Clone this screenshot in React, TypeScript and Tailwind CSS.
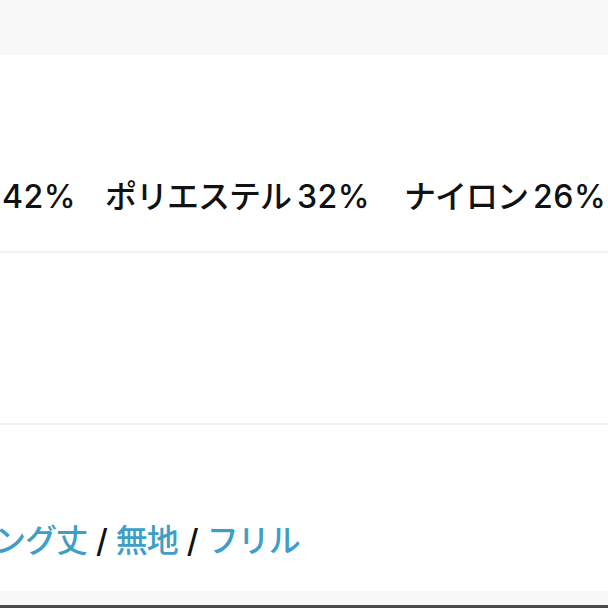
const jp = { fontFamily: '"Noto Sans CJK JP", "Noto Sans", sans-serif' }
const num = { fontFamily: 'Inter, "Noto Sans CJK JP", sans-serif' }

export default function App() {
  return (
    <div className="w-[608px] h-[608px] overflow-hidden bg-white flex flex-col" style={jp}>
      <div className="h-[55px] bg-[#f8f8f8] shrink-0" />

      {/* 素材 */}
      <div className="h-[198px] shrink-0 flex items-end pb-[38px] border-b-2 border-[#f1f1f1]">
        <p className="flex items-baseline text-[32px] leading-none font-medium text-[#111] whitespace-nowrap pl-[2px]">
          <span className="tracking-[0.5px]" style={num}>42%</span>
          <span className="ml-[29px] tracking-[-1px]">ポリエステル</span>
          <span className="ml-[6px] tracking-[0.5px]" style={num}>32%</span>
          <span className="ml-[34px] tracking-[-1px]">ナイロン</span>
          <span className="ml-[5px] tracking-[0.5px]" style={num}>26%</span>
        </p>
      </div>

      <div className="h-[172px] shrink-0 border-b-2 border-[#f1f1f1]" />

      {/* タグ */}
      <div className="h-[166px] shrink-0 flex items-end pb-[34px]">
        <p className="flex items-baseline text-[32px] leading-none font-medium whitespace-nowrap -ml-[6px] tracking-[-1px]">
          <span className="text-[#3d9fc6]">ング丈</span>
          <span className="text-[#111] mx-[9px]" style={num}>/</span>
          <span className="text-[#3d9fc6]">無地</span>
          <span className="text-[#111] mx-[9px]" style={num}>/</span>
          <span className="text-[#3d9fc6]">フリル</span>
        </p>
      </div>

      <div className="h-[14px] shrink-0 bg-[#f8f8f8]" />
      <div className="h-[3px] shrink-0 bg-[#4a4a4a]" />
    </div>
  )
}
